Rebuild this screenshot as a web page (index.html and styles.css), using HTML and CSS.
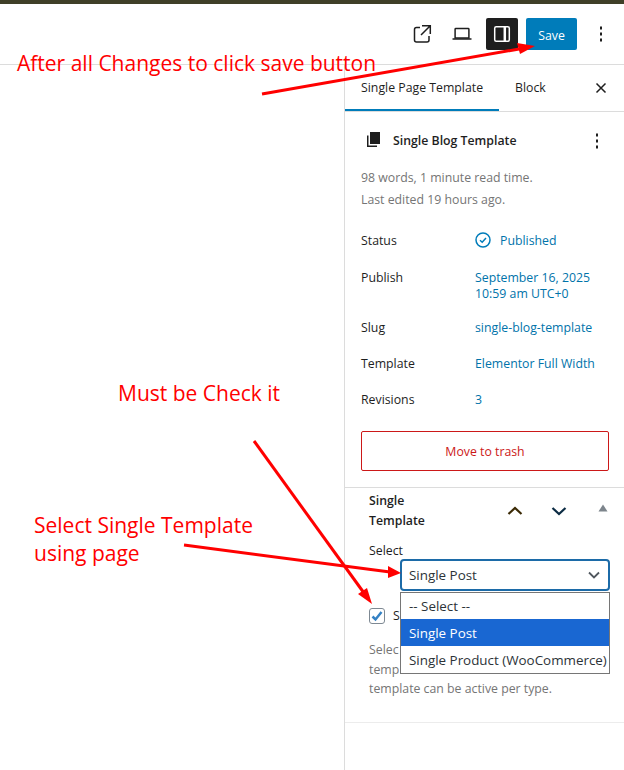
FILE: index.html
```html
<!DOCTYPE html>
<html lang="en">
<head>
<meta charset="utf-8">
<title>Single Page Template</title>
<link rel="stylesheet" href="styles.css">
</head>
<body>
<div class="topline"></div>
<header class="header">
  <button class="icon-btn"><svg width="24" height="24" viewBox="0 0 24 24" fill="none" stroke="#1e1e1e" stroke-width="1.5"><path d="M19 14v4a2 2 0 0 1-2 2H6.500a2 2 0 0 1-2-2V7.500a2 2 0 0 1 2-2H10"/><path d="M12 3.700h8.300V12M20 4l-9 9"/></svg></button>
  <button class="icon-btn"><svg width="24" height="24" viewBox="0 0 24 24" fill="none" stroke="#1e1e1e" stroke-width="1.500"><path d="M5.800 6.500h12.400a.7.7 0 0 1 .7.7V16H5.100V7.200a.7.7 0 0 1 .7-.7z"/><path d="M2.500 17h19"/></svg></button>
  <button class="icon-btn toggle"><svg width="24" height="24" viewBox="0 0 24 24" fill="none" stroke="#fff" stroke-width="1.500"><rect x="4.700" y="4.700" width="14.600" height="14.600" rx="1.500"/><path d="M14.800 4.700v14.600" stroke-width="2.500"/></svg></button>
  <button class="save">Save</button>
  <button class="icon-btn more"><svg width="24" height="24" viewBox="0 0 24 24" fill="#1e1e1e"><rect x="11" y="4.500" width="2" height="3"/><rect x="11" y="10.500" width="2" height="3"/><rect x="11" y="16.500" width="2" height="3"/></svg></button>
</header>
<main class="main">
  <div class="canvas"></div>
  <aside class="sidebar">
    <div class="tabs">
      <div class="tab active">Single Page Template</div>
      <div class="tab">Block</div>
      <svg class="close" width="12" height="12" viewBox="0 0 12 12" fill="none" stroke="#1e1e1e" stroke-width="1.500"><path d="M1.500 1.500l9 9M10.500 1.500l-9 9"/></svg>
    </div>
    <section class="summary">
      <div class="title-row">
        <svg class="doc-icon" width="16" height="18" viewBox="0 0 16 18" fill="#1e1e1e"><rect x="5" y="1" width="10" height="12"/><path d="M2 4.500h1.500V14.500H12V16H2z"/></svg>
        <span class="title">Single Blog Template</span>
        <svg class="title-more" width="24" height="24" viewBox="0 0 24 24" fill="#1e1e1e"><rect x="11" y="4.500" width="2" height="3"/><rect x="11" y="10.500" width="2" height="3"/><rect x="11" y="16.500" width="2" height="3"/></svg>
      </div>
      <p class="meta">98 words, 1 minute read time.<br>Last edited 19 hours ago.</p>
      <div class="rows">
        <div class="row status-row"><span class="label">Status</span><span class="value status"><svg width="18" height="18" viewBox="0 0 18 18" fill="none" stroke="#007cba" stroke-width="1.500"><circle cx="8" cy="8" r="7"/><path d="M5 8.300l2.200 2 3.800-4.300"/></svg>Published</span></div>
        <div class="row publish-row"><span class="label">Publish</span><span class="value">September 16, 2025<br>10:59 am UTC+0</span></div>
        <div class="row"><span class="label">Slug</span><span class="value">single-blog-template</span></div>
        <div class="row"><span class="label">Template</span><span class="value">Elementor Full Width</span></div>
        <div class="row"><span class="label">Revisions</span><span class="value">3</span></div>
      </div>
      <button class="trash">Move to trash</button>
    </section>
    <section class="meta-box">
      <div class="box-head">
        <h2 class="box-title">Single<br>Template</h2>
        <svg class="chev" width="20" height="20" viewBox="0 0 20 20" fill="none" stroke="#3b2a05" stroke-width="2.200"><path d="M3.500 13l6.500-6 6.500 6"/></svg>
        <svg class="chev" width="20" height="20" viewBox="0 0 20 20" fill="none" stroke="#0c2c44" stroke-width="2.200"><path d="M3.500 7l6.500 6 6.500-6"/></svg>
        <svg class="tri" width="10" height="8" viewBox="0 0 10 8" fill="#7d858c"><path d="M5 0.500l4.500 7h-9z"/></svg>
      </div>
      <div class="field-label">Select</div>
      <div class="select-wrap">
        <div class="select">Single Post<svg width="14" height="10" viewBox="0 0 14 10" fill="none" stroke="#50575e" stroke-width="1.800"><path d="M2 2.500l5 5 5-5"/></svg></div>
      </div>
      <label class="check-row"><span class="checkbox"><svg width="14" height="14" viewBox="0 0 14 14" fill="none" stroke="#3582c4" stroke-width="2.500"><path d="M2.500 7.500l3 3 6-7.500"/></svg></span><span class="check-text">S</span></label>
      <p class="help">Selec<br>temp<br>template can be active per type.</p>
    </section>
  </aside>
</main>

<ul class="dropdown">
  <li>-- Select --</li>
  <li class="selected">Single Post</li>
  <li>Single Product (WooCommerce)</li>
</ul>

<div class="note note-save">After all Changes to click save button</div>
<div class="note note-check">Must be Check it</div>
<div class="note note-select">Select Single Template<br>using page</div>

<svg class="arrows" width="624" height="770" viewBox="0 0 624 770" fill="#ff0000" stroke="#ff0000" stroke-width="3">
  <path d="M262 94L522 48.500"/><path stroke="none" d="M535 46L517 43L520 54z"/>
  <path d="M184 545L390 572"/><path stroke="none" d="M401 573L388 566L388 578z"/>
  <path d="M254 441L364 593"/><path stroke="none" d="M372 604L367 588L358 594z"/>
</svg>
</body>
</html>
```

FILE: styles.css
```css
* { box-sizing: border-box; }
html, body { margin: 0; padding: 0; height: 770px; overflow: hidden; }
body {
  position: relative;
  background: #fff;
  color: #1e1e1e;
  font-family: "Open Sans", "Noto Sans", sans-serif;
  font-size: 12.3px;
  line-height: 18px;
}
button { font: inherit; border: 0; background: none; padding: 0; }
p, h2, ul { margin: 0; padding: 0; }

.topline { height: 4px; background: #3f3f28; }
.header {
  height: 61px;
  border-bottom: 1px solid #dcdcdc;
  display: flex;
  align-items: flex-start;
  justify-content: flex-end;
  padding: 14px 11px 0 0;
}
.icon-btn {
  width: 32px; height: 32px;
  display: flex; align-items: center; justify-content: center;
  border-radius: 2px;
  margin-left: 8px;
}
.toggle { background: #1e1e1e; }
.more { width: 24px; margin-left: 12px; }
.save {
  width: 51px; height: 32px;
  margin-left: 8px;
  padding-top: 3px;
  background: #007cba;
  color: #fff;
  border-radius: 2px;
}

.main { display: flex; height: 705px; }
.canvas { flex: 1; }
.sidebar { width: 280px; border-left: 1px solid #dcdcdc; }

.tabs {
  position: relative;
  height: 47px;
  display: flex;
  border-bottom: 1px solid #dcdcdc;
}
.tab { padding: 14px 16px 0; height: 46px; white-space: nowrap; }
.tab.active { box-shadow: inset 0 -2px 0 #007cba; width: 154px; }
.close { position: absolute; right: 17px; top: 17px; }

.summary { padding: 0 15px 0 16px; border-bottom: 1px solid #dcdcdc; height: 359px; }
.title-row { display: flex; align-items: center; height: 24px; margin-top: 17px; position: relative; }
.doc-icon { margin-right: 12px; margin-left: 4px; margin-top: -3px; }
.title { font-weight: 600; }
.title-more { position: absolute; right: 0; top: 0; }
.meta { margin-top: 14px; color: #757575; line-height: 22px; }

.rows { margin-top: 21px; }
.row { display: flex; height: 36px; }
.label { width: 114px; }
.value { color: #0073aa; line-height: 16px; padding-top: 1px; }
.publish-row { height: 50px; }
.status { display: flex; align-items: flex-start; gap: 7px; height: 20px; }
.status svg { margin-top: -1px; flex: none; }
.status-row { height: 37px; }

.trash {
  display: block;
  width: 248px; height: 40px;
  margin-top: 4px;
  padding-top: 2px;
  border: 1px solid #cc1818;
  border-radius: 2px;
  color: #cc1818;
  background: #fff;
}

.meta-box { height: 235px; padding: 3px 16px 0 24px; border-bottom: 1px solid #ececec; }
.box-head { display: flex; align-items: center; height: 40px; position: relative; }
.box-title { font-size: inherit; font-weight: 600; line-height: 20px; width: 136px; }
.chev { margin-right: 24px; }
.tri { position: absolute; right: 0; top: 13px; }
.field-label { margin-top: 11px; height: 18px; }
.select-wrap { margin-left: 31px; margin-top: -1px; }
.select {
  height: 32px;
  width: 210px;
  border: 2px solid #1c6ba8;
  border-radius: 4px;
  padding: 6px 7px;
  color: #2c3338;
  display: flex;
  align-items: center;
  justify-content: space-between;
  font-size: 13.4px;
}
.check-row { display: flex; align-items: center; gap: 8px; margin-top: 9px; height: 32px; }
.checkbox {
  width: 16px; height: 16px;
  border: 1px solid #7e8993;
  border-radius: 3px;
  display: flex; align-items: center; justify-content: center;
}
.help { color: #757575; margin-top: 8px; line-height: 19.500px; }

.dropdown {
  position: absolute;
  left: 400px; top: 592px;
  width: 210px;
  list-style: none;
  background: #fff;
  border: 1px solid #767676;
  font-size: 13.4px;
  color: #2c3338;
}
.dropdown li { height: 27px; padding: 5px 8px 0; line-height: 18px; white-space: nowrap; }
.dropdown li:first-child { height: 26px; padding-top: 4px; }
.dropdown .selected { background: #1967d2; color: #fff; }

.note {
  position: absolute;
  color: #ff0000;
  font-family: "Open Sans", "Noto Sans", sans-serif;
  font-size: 21px;
  line-height: 28px;
  white-space: nowrap;
}
.note-save { left: 17px; top: 49px; }
.note-check { left: 118px; top: 379px; }
.note-select { left: 34px; top: 511px; }
.arrows { position: absolute; left: 0; top: 0; pointer-events: none; }
```
